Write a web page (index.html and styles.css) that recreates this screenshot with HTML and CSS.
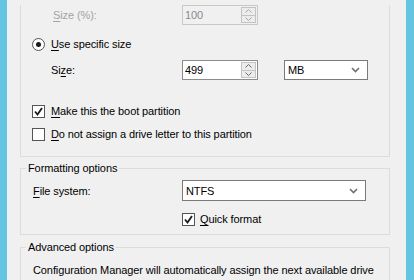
FILE: index.html
```html
<!DOCTYPE html>
<html lang="en">

<head>
    <meta charset="UTF-8">
    <meta name="viewport" content="width=device-width, initial-scale=1.0">
    <title>Partition Properties</title>
    <link rel="stylesheet" href="styles.css">
</head>

<body>
    <div class="frame">
        <div class="edge"></div>

        <main class="panel">

            <div class="group group_top">
                <div class="row row_pct">
                    <span class="lbl lbl_pct off"><u>S</u>ize (%):</span>
                    <div class="spin spin_off">
                        <span class="spin_val">100</span>
                        <span class="spin_btns">
                            <span class="spin_btn"><svg width="7" height="4" viewBox="0 0 7 4"><polyline points="0.5,3.5 3.5,0.5 6.5,3.5" /></svg></span>
                            <span class="spin_btn"><svg width="7" height="4" viewBox="0 0 7 4"><polyline points="0.5,0.5 3.5,3.5 6.5,0.5" /></svg></span>
                        </span>
                    </div>
                </div>

                <div class="row row_radio">
                    <span class="radio"><span class="radio_dot"></span></span>
                    <span><u>U</u>se specific size</span>
                </div>

                <div class="row row_size">
                    <span class="lbl lbl_size">Si<u>z</u>e:</span>
                    <div class="spin">
                        <span class="spin_val">499</span>
                        <span class="spin_btns">
                            <span class="spin_btn"><svg width="7" height="4" viewBox="0 0 7 4"><polyline points="0.5,3.5 3.5,0.5 6.5,3.5" /></svg></span>
                            <span class="spin_btn"><svg width="7" height="4" viewBox="0 0 7 4"><polyline points="0.5,0.5 3.5,3.5 6.5,0.5" /></svg></span>
                        </span>
                    </div>
                    <div class="combo combo_unit">
                        <span>MB</span>
                        <svg class="chev" width="9" height="6" viewBox="0 0 9 6"><polyline points="1,1 4.5,4.5 8,1" /></svg>
                    </div>
                </div>

                <div class="row row_check first_check">
                    <span class="check"><svg width="11" height="11" viewBox="0 0 11 11"><polyline points="2,5.5 4.5,8.5 9,2" /></svg></span>
                    <span><u>M</u>ake this the boot partition</span>
                </div>
                <div class="row row_check">
                    <span class="check"></span>
                    <span><u>D</u>o not assign a drive letter to this partition</span>
                </div>
            </div>

            <fieldset class="group group_fmt">
                <legend>Formatting options</legend>
                <div class="row row_fs">
                    <span class="lbl lbl_fs"><u>F</u>ile system:</span>
                    <div class="combo combo_fs">
                        <span>NTFS</span>
                        <svg class="chev" width="9" height="6" viewBox="0 0 9 6"><polyline points="1,1 4.5,4.5 8,1" /></svg>
                    </div>
                </div>
                <div class="row row_quick">
                    <span class="check"><svg width="11" height="11" viewBox="0 0 11 11"><polyline points="2,5.5 4.5,8.5 9,2" /></svg></span>
                    <span><u>Q</u>uick format</span>
                </div>
            </fieldset>

            <fieldset class="group group_adv">
                <legend>Advanced options</legend>
                <p class="note">Configuration Manager will automatically assign the next available drive letter to this partition. To save this drive letter as a task sequence variable, enter a name for the variable.</p>
            </fieldset>

        </main>

        <div class="edge edge_r"></div>
    </div>
</body>

</html>
```

FILE: styles.css
```css
body {
    margin: 0;
    width: 414px;
    height: 280px;
    overflow: hidden;
    background-color: #f0f0f0;
    font-family: "Liberation Sans", Arial, sans-serif;
    font-size: 11px;
    letter-spacing: -0.1px;
    color: #000;
}

u {
    text-decoration-thickness: 1px;
    text-underline-offset: 2px;
}

.frame {
    display: flex;
    height: 280px;
}

.edge {
    width: 7px;
    background-color: #66c4e3;
    flex-shrink: 0;
}

.edge_r {
    width: 8px;
}

.panel {
    flex: 1;
    padding: 0 16px 0 13px;
}

.group {
    border: 1px solid #dcdcdc;
    margin: 0;
}

.group_top {
    border-top: none;
    height: 152px;
    box-sizing: border-box;
}

.row {
    display: flex;
    align-items: center;
    height: 20px;
}

.lbl {
    flex-shrink: 0;
}

.off {
    color: #a3a3a3;
}

.row_pct {
    height: 20px;
    margin-top: 5px;
}

.lbl_pct {
    padding-left: 32px;
    width: 129px;
}

.row_radio {
    margin-top: 9px;
    padding-left: 11px;
    gap: 6px;
}

.radio {
    width: 11px;
    height: 11px;
    border: 1px solid #555;
    border-radius: 50%;
    background-color: #fff;
    display: flex;
    align-items: center;
    justify-content: center;
}

.radio_dot {
    width: 5px;
    height: 5px;
    border-radius: 50%;
    background-color: #1a1a1a;
}

.row_size {
    margin-top: 6px;
}

.lbl_size {
    padding-left: 30px;
    width: 131px;
}

/* spin boxes */
.spin {
    width: 76px;
    height: 20px;
    box-sizing: border-box;
    border: 1px solid #8c8c8c;
    background-color: #fff;
    display: flex;
    align-items: center;
    justify-content: space-between;
    padding: 1px 1px 1px 2px;
}

.spin_off {
    border-color: #c8c8c8;
    background-color: #f0f0f0;
    color: #8a8a8a;
}

.spin_btns {
    display: flex;
    flex-direction: column;
    height: 100%;
}

.spin_btn {
    width: 13px;
    flex: 1;
    border: 1px solid #c3c3c3;
    background-color: #ececec;
    display: flex;
    align-items: center;
    justify-content: center;
}

.spin_btn + .spin_btn {
    border-top: none;
}

.spin_btn polyline {
    fill: none;
    stroke: #6a6a6a;
    stroke-width: 1;
}

.spin_off .spin_btn polyline {
    stroke: #a8a8a8;
}

/* combo boxes */
.combo {
    height: 20px;
    box-sizing: border-box;
    border: 1px solid #7a7a7a;
    background-color: #fff;
    display: flex;
    align-items: center;
    justify-content: space-between;
    padding: 0 7px 0 3px;
}

.combo_unit {
    width: 84px;
    margin-left: 26px;
}

.combo_fs {
    width: 184px;
    height: 21px;
}

.chev polyline {
    fill: none;
    stroke: #707070;
    stroke-width: 1.6;
}

/* checkboxes */
.row_check {
    padding-left: 11px;
    gap: 6px;
}

.first_check {
    margin-top: 21px;
}

.row_check + .row_check {
    margin-top: 3px;
}

.check {
    width: 11px;
    height: 11px;
    border: 1px solid #555;
    background-color: #fff;
    display: flex;
    align-items: center;
    justify-content: center;
}

.check polyline {
    fill: none;
    stroke: #1a1a1a;
    stroke-width: 1.8;
}

/* fieldsets */
fieldset.group {
    padding: 0 0 0 5px;
    min-width: 0;
}

legend {
    padding: 0 2px;
    line-height: 15px;
}

.group_fmt {
    margin-top: 4px;
    height: 74px;
    box-sizing: border-box;
}

.row_fs {
    margin-top: 4px;
    height: 21px;
}

.lbl_fs {
    padding-left: 7px;
    width: 149px;
}

.row_quick {
    margin-top: 8px;
    padding-left: 156px;
    gap: 5px;
}

.group_adv {
    margin-top: 5px;
}

.note {
    margin: 8px 0 0 0;
    padding-left: 7px;
    padding-right: 8px;
    line-height: 14px;
}
```
